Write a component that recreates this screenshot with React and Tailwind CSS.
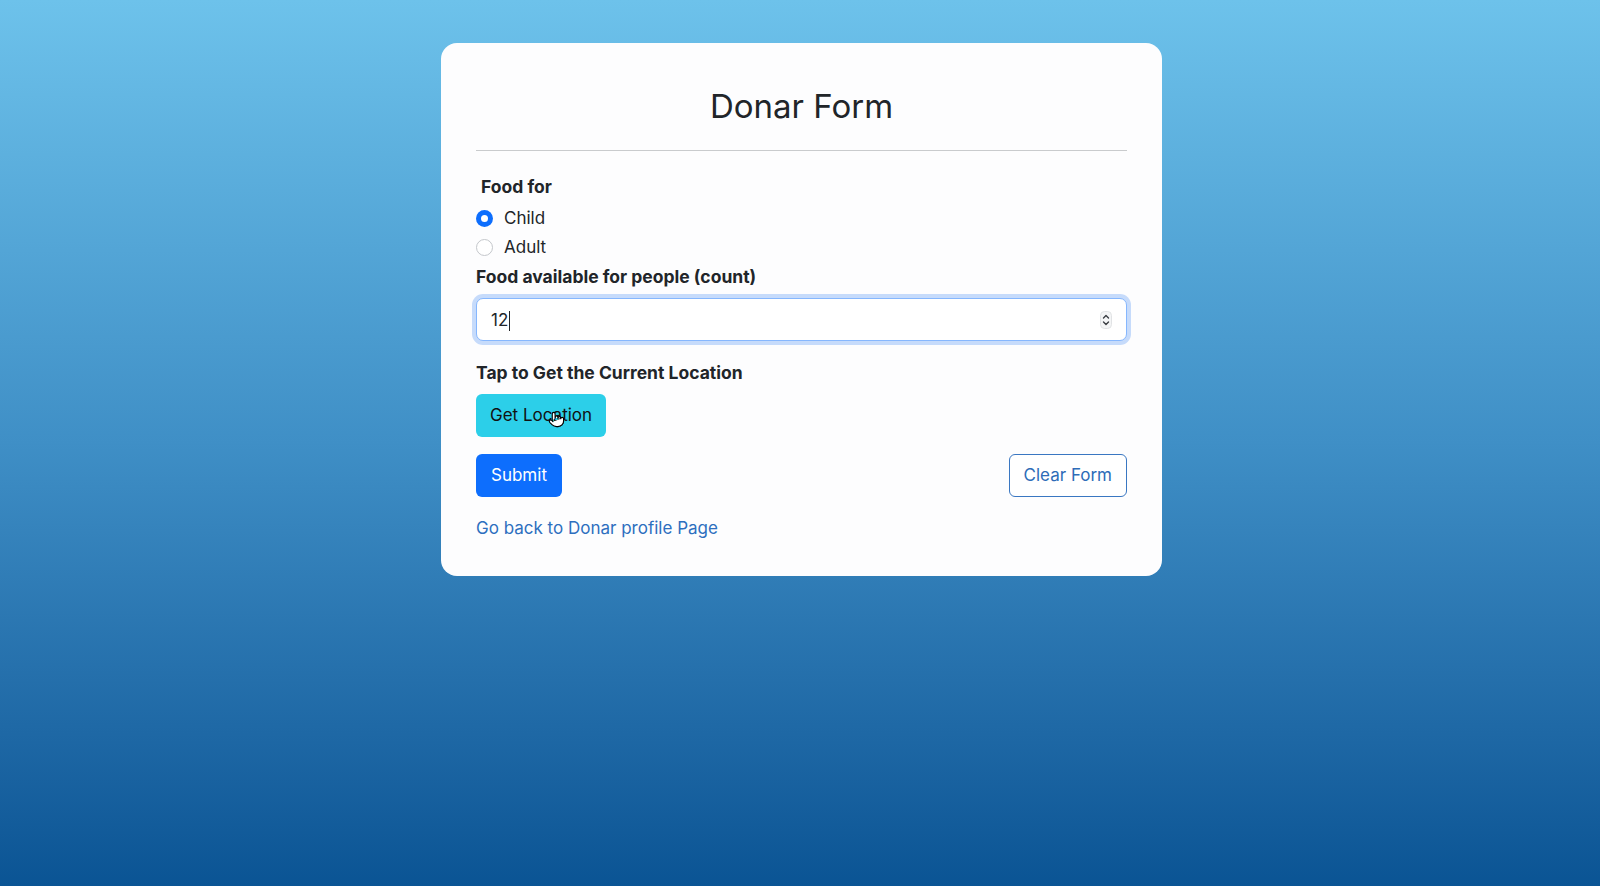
import { Pointer } from 'lucide-react'

function Radio({ checked, label }) {
  return (
    <label className="flex h-[29px] items-center gap-[11px]">
      {checked ? (
        <span className="flex h-[17px] w-[17px] items-center justify-center rounded-full bg-[#0d6efd]">
          <span className="h-[7px] w-[7px] rounded-full bg-white" />
        </span>
      ) : (
        <span className="h-[17px] w-[17px] rounded-full border border-[#c4c7cb] bg-white" />
      )}
      <span className="text-[17px] text-[#212529]">{label}</span>
    </label>
  )
}

export default function App() {
  return (
    <div
      className="min-h-screen bg-gradient-to-b from-[#6dc2eb] via-[#3f8fc6] to-[#0a5494] pt-[43px] pl-[3px]"
      style={{ fontFamily: 'Inter, "Noto Sans", sans-serif' }}
    >
      <div className="mx-auto w-[721px] rounded-[16px] bg-[#fdfdfe] px-[35px] pt-[42px] pb-[36px]">
        <h2 className="text-center text-[33px] leading-[42px] text-[#212529]">Donar Form</h2>
        <hr className="mt-[23px] border-t border-[#c9cbcd]" />

        <p className="mt-[24px] pl-[5px] text-[17.5px] font-bold leading-[24px] text-[#212529]">Food for</p>
        <div className="mt-[5px]">
          <Radio checked label="Child" />
          <Radio label="Adult" />
        </div>
        <p className="flex h-[30px] items-center text-[17.5px] font-bold text-[#212529]">Food available for people (count)</p>

        <div className="relative mt-[6px] flex h-[43px] items-center rounded-[7px] border border-[#86b7fe] bg-white px-[14px] pt-[3px] shadow-[0_0_0_4px_#c6dbfb]">
          <span className="text-[17px] text-[#212529]">12</span>
          <span className="ml-[1px] h-[20px] w-px bg-[#212529]" />
          <svg className="absolute right-[14px] top-1/2 -translate-y-1/2" width="12" height="18" viewBox="0 0 12 18">
            <rect x="0.5" y="0.5" width="11" height="17" rx="4" fill="#f4f5f6" stroke="#e1e3e5" />
            <path d="M3.5 7 L6 4.5 L8.5 7" fill="none" stroke="#3b3f44" strokeWidth="1.4" strokeLinecap="round" strokeLinejoin="round" />
            <path d="M3.5 11 L6 13.5 L8.5 11" fill="none" stroke="#3b3f44" strokeWidth="1.4" strokeLinecap="round" strokeLinejoin="round" />
          </svg>
        </div>

        <p className="mt-[20px] text-[17.5px] font-bold leading-[24px] text-[#212529]">Tap to Get the Current Location</p>
        <div className="relative mt-[9px] w-fit">
          <button className="h-[43px] rounded-[6px] bg-[#2ccfe9] px-[14px] text-[17px] text-[#111]">Get Location</button>
          <Pointer size={17} className="absolute left-[72px] top-[17px] fill-white text-black" strokeWidth={1.6} />
        </div>

        <div className="mt-[17px] flex items-center justify-between">
          <button className="h-[43px] rounded-[6px] bg-[#0d6efd] px-[15px] text-[17px] text-white">Submit</button>
          <button className="h-[43px] rounded-[6px] border border-[#3a77c2] bg-white px-[14px] text-[17px] text-[#2d6cb8]">Clear Form</button>
        </div>

        <a href="#" className="mt-[19px] block w-fit text-[17px] leading-[24px] text-[#2d6fbf]">Go back to Donar profile Page</a>
      </div>
    </div>
  )
}
